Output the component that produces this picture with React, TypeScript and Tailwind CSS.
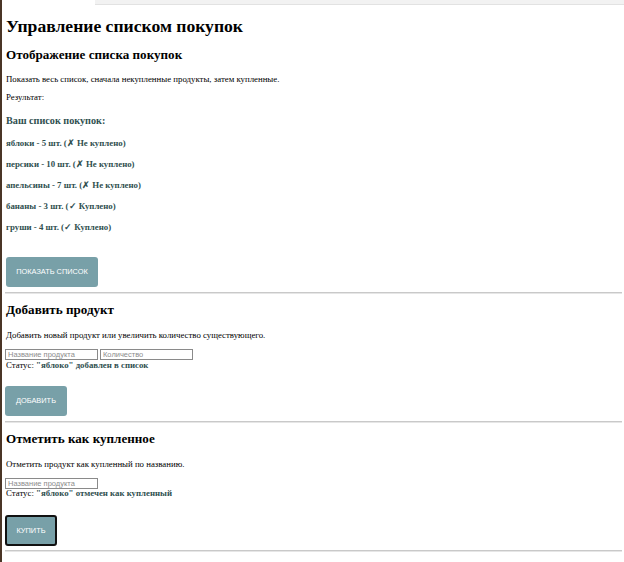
import React from 'react';

const items = [
  { name: 'яблоки', qty: 5, bought: false },
  { name: 'персики', qty: 10, bought: false },
  { name: 'апельсины', qty: 7, bought: false },
  { name: 'бананы', qty: 3, bought: true },
  { name: 'груши', qty: 4, bought: true },
];

const serif = { fontFamily: '"Liberation Serif", "Times New Roman", serif' };

const Divider = () => <div className="h-[2px] w-full bg-[#c9c9c9] border-b border-[#e6e6e6]" />;

export default function App() {
  return (
    <div className="flex w-[624px] h-[562px] bg-white overflow-hidden" style={serif}>
      <div className="w-[2px] shrink-0 bg-[#4a3526]" />
      <div className="flex-1 flex flex-col">
        <div className="flex h-[5px]">
          <div className="w-[93px]" />
          <div className="flex-1 bg-[#f2f2f2] border-b border-[#e2e2e2]" />
        </div>
        <div className="pl-[4px] pr-[2px] flex flex-col text-black">
          <h1 className="mt-[10px] text-[17.6px] leading-[22px] font-bold">Управление списком покупок</h1>

          <h2 className="mt-[10px] text-[13.1px] leading-[16px] font-bold">Отображение списка покупок</h2>
          <p className="mt-[10px] text-[8.8px] leading-[12px]">
            Показать весь список, сначала некупленные продукты, затем купленные.
          </p>
          <p className="mt-[6px] text-[8.8px] leading-[12px]">Результат:</p>
          <h3 className="mt-[11px] text-[10.2px] leading-[13px] font-bold text-[#2f4f4f]">Ваш список покупок:</h3>
          <ul className="mt-[10px] flex flex-col gap-[9px]">
            {items.map((it) => (
              <li key={it.name} className="text-[8.8px] leading-[12px] font-bold text-[#2f4f4f]">
                {it.name} - {it.qty} шт. ({it.bought ? '✓ Куплено' : '✗ Не куплено'})
              </li>
            ))}
          </ul>
          <button className="mt-[24px] w-[92px] h-[30px] rounded-[3px] bg-[#78a0a8] text-white text-[7.4px] uppercase font-['Liberation_Sans',Arial,sans-serif]">
            Показать список
          </button>
          <div className="mt-[5px] -ml-[1px]">
            <Divider />
          </div>

          <h2 className="mt-[8px] text-[13.1px] leading-[16px] font-bold">Добавить продукт</h2>
          <p className="mt-[11px] text-[8.8px] leading-[12px]">
            Добавить новый продукт или увеличить количество существующего.
          </p>
          <div className="mt-[8px] flex gap-[2px] -ml-[1px]">
            <input
              placeholder="Название продукта"
              className="w-[93px] h-[11px] border border-[#8a8a8a] px-[2px] text-[7.5px] leading-[9px] placeholder:text-[#8c8c8c] font-['Liberation_Sans',Arial,sans-serif]"
            />
            <input
              placeholder="Количество"
              className="w-[93px] h-[11px] border border-[#8a8a8a] px-[2px] text-[7.5px] leading-[9px] placeholder:text-[#8c8c8c] font-['Liberation_Sans',Arial,sans-serif]"
            />
          </div>
          <p className="-mt-[1px] text-[8.8px] leading-[12px]">
            Статус: <b className="text-[#2f4f4f]">"яблоко" добавлен в список</b>
          </p>
          <button className="mt-[15px] w-[62px] h-[30px] -ml-[1px] rounded-[3px] bg-[#78a0a8] text-white text-[7.4px] uppercase font-['Liberation_Sans',Arial,sans-serif]">
            Добавить
          </button>
          <div className="mt-[5px] -ml-[1px]">
            <Divider />
          </div>

          <h2 className="mt-[8px] text-[13.1px] leading-[16px] font-bold">Отметить как купленное</h2>
          <p className="mt-[11px] text-[8.8px] leading-[12px]">Отметить продукт как купленный по названию.</p>
          <div className="mt-[8px] -ml-[1px] flex">
            <input
              placeholder="Название продукта"
              className="w-[93px] h-[11px] border border-[#8a8a8a] px-[2px] text-[7.5px] leading-[9px] placeholder:text-[#8c8c8c] font-['Liberation_Sans',Arial,sans-serif]"
            />
          </div>
          <p className="-mt-[2px] text-[8.8px] leading-[12px]">
            Статус: <b className="text-[#2f4f4f]">"яблоко" отмечен как купленный</b>
          </p>
          <button className="mt-[16px] w-[52px] h-[31px] -ml-[1px] rounded-[3px] border-2 border-[#111] bg-[#78a0a8] text-white text-[7.4px] uppercase font-['Liberation_Sans',Arial,sans-serif]">
            Купить
          </button>
          <div className="mt-[4px] -ml-[1px]">
            <Divider />
          </div>
        </div>
      </div>
    </div>
  );
}
